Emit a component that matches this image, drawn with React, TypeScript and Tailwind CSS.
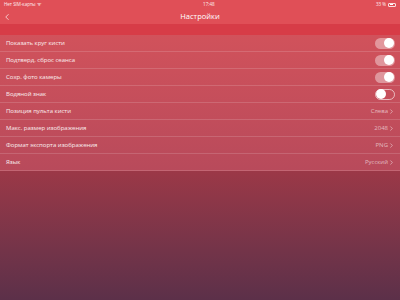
import { ChevronLeft, ChevronRight } from "lucide-react";

interface Row {
  label: string;
  toggle?: boolean;
  value?: string;
}

const rows: Row[] = [
  { label: "Показать круг кисти", toggle: true },
  { label: "Подтверд. сброс сеанса", toggle: true },
  { label: "Сохр. фото камеры", toggle: true },
  { label: "Водяной знак", toggle: false },
  { label: "Позиция пульта кисти", value: "Слева" },
  { label: "Макс. размер изображения", value: "2048" },
  { label: "Формат экспорта изображения", value: "PNG" },
  { label: "Язык", value: "Русский" },
];

function Toggle({ on }: { on: boolean }) {
  return on ? (
    <div className="flex h-[11px] w-[20px] items-center justify-end rounded-full bg-white/40 p-[1px]">
      <div className="h-[10px] w-[10px] rounded-full bg-white" />
    </div>
  ) : (
    <div className="flex h-[11px] w-[20px] items-center justify-start rounded-full border border-white/60">
      <div className="h-[10px] w-[10px] rounded-full bg-white" />
    </div>
  );
}

export default function App() {
  return (
    <div
      className="flex h-[300px] w-[400px] flex-col text-white"
      style={{ fontFamily: '"Open Sans", "Liberation Sans", sans-serif' }}
    >
      <div className="bg-[#e04f57]">
        <div className="flex h-[9px] items-center justify-between px-[4px] text-[4.5px] leading-none text-white/90">
          <span>Нет SIM-карты ᯤ</span>
          <span>17:48</span>
          <span className="flex items-center gap-[2px]">
            33 %
            <span className="flex h-[4px] w-[8px] items-center rounded-[1px] border border-white/80 p-[0.5px]">
              <span className="h-full w-[3px] bg-white" />
            </span>
          </span>
        </div>
        <div className="relative flex h-[15px] items-center justify-center">
          <ChevronLeft className="absolute left-[2px] h-[10px] w-[10px] text-white/80" strokeWidth={2} />
          <span className="text-[7.5px] font-medium">Настройки</span>
        </div>
      </div>
      <div className="h-[11px] bg-[#d73c47]" />
      <div className="bg-gradient-to-b from-[#d1525b] to-[#b84a5b]">
        {rows.map((row) => (
          <div
            key={row.label}
            className="flex h-[17px] items-center justify-between border-b border-white/15 pl-[6px] pr-[5px]"
          >
            <span className="text-[6px] text-white/90">{row.label}</span>
            {row.toggle !== undefined ? (
              <Toggle on={row.toggle} />
            ) : (
              <span className="flex items-center text-[6px] text-white/60">
                {row.value}
                <ChevronRight className="h-[7px] w-[7px]" strokeWidth={2.5} />
              </span>
            )}
          </div>
        ))}
      </div>
      <div className="flex-1 bg-gradient-to-b from-[#9b3847] to-[#5c3049]" />
    </div>
  );
}
